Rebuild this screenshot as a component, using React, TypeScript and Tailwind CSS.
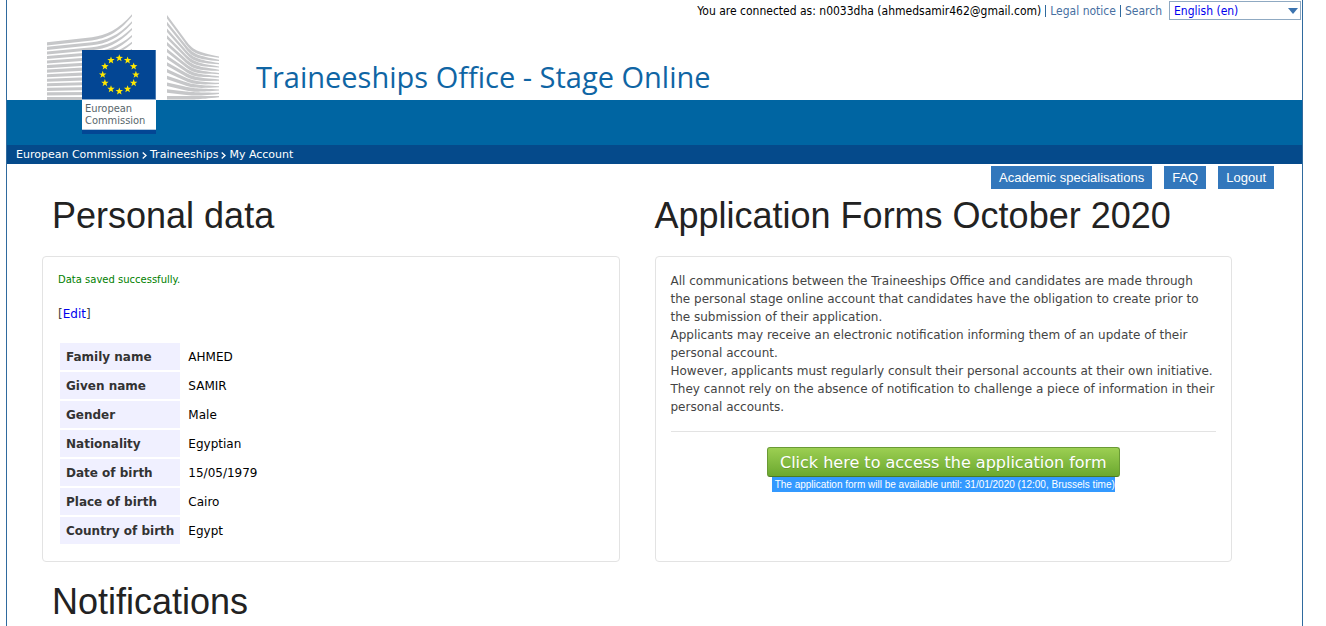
import { Fragment } from "react";

const crumbs = ["European Commission", "Traineeships", "My Account"];

const actions = ["Academic specialisations", "FAQ", "Logout"];

const personalData = [
  ["Family name", "AHMED"],
  ["Given name", "SAMIR"],
  ["Gender", "Male"],
  ["Nationality", "Egyptian"],
  ["Date of birth", "15/05/1979"],
  ["Place of birth", "Cairo"],
  ["Country of birth", "Egypt"],
];

const strips = Array.from({ length: 13 }, (_, i) => i);

// Tapered strip of the left wing, flatter towards the bottom
function leftStrip(i: number) {
  const k = 1 - i / 12;
  const y = 42.3 + 4.55 * i;
  const b = y + 3.1;
  return `M47 ${y}L92 ${y - 5 * k}C106 ${y - 7 * k} 118 ${y - 12 * k} 132 ${y - 28 * k}V${y - 28 * k + 2}C118 ${b - 12 * k} 106 ${b - 7 * k} 92 ${b - 5 * k}L47 ${b}Z`;
}

function rightStrip(i: number) {
  const k = 1 - i / 12;
  const y = 15 + 6.75 * i;
  const b = y + 3.6;
  const e = y + 41.5 * k;
  return `M167 ${y}L184 ${y + 23 * k}C193 ${y + 36 * k} 198 ${y + 37 * k} 219 ${e}V${e + 1.2}C197 ${b + 37 * k} 192 ${b + 35 * k} 184 ${b + 23 * k}L167 ${b}Z`;
}

function star(cx: number, cy: number) {
  const points = [];
  for (let i = 0; i < 10; i++) {
    const r = i % 2 ? 1.6 : 3.9;
    const a = (Math.PI * i) / 5 - Math.PI / 2;
    points.push(`${(cx + r * Math.cos(a)).toFixed(2)},${(cy + r * Math.sin(a)).toFixed(2)}`);
  }
  return points.join(" ");
}

function Logo() {
  return (
    <svg
      role="img"
      aria-label="European Commission"
      viewBox="47 14 173 120"
      className="absolute left-10 top-[14px] w-[173px] h-[120px]"
    >
      <g fill="#c6c7c9">
        {strips.map((i) => (
          <path key={i} d={leftStrip(i)} />
        ))}
        {strips.map((i) => (
          <path key={i} d={rightStrip(i)} />
        ))}
      </g>
      <rect x="82" y="50" width="74" height="50" fill="#8fb0d2" />
      <rect x="82" y="50" width="73.5" height="49" fill="#034694" />
      {Array.from({ length: 12 }, (_, i) => {
        const a = (Math.PI * i) / 6;
        return (
          <polygon
            key={i}
            fill="#ffe800"
            points={star(119.3 + 16.6 * Math.sin(a), 74.7 - 16.6 * Math.cos(a))}
          />
        );
      })}
      <rect x="82" y="100" width="74" height="29" fill="#fff" />
      <rect x="82" y="129" width="74" height="1" fill="#b5cbe0" />
      <rect x="82" y="130" width="74" height="4" fill="#034694" />
      <g fill="#58666b" fontFamily="'DejaVu Sans Condensed', 'DejaVu Sans', sans-serif" fontSize="11">
        <text x="85" y="112">European</text>
        <text x="85" y="124">Commission</text>
      </g>
    </svg>
  );
}

function Chevron() {
  return (
    <svg viewBox="0 0 5 7" className="w-[5px] h-[7px] mx-[3px]" fill="none" stroke="#fff" strokeWidth="1.3">
      <path d="M.7.5 4 3.5.7 6.5" />
    </svg>
  );
}

function Header() {
  return (
    <header className="relative">
      <div className="flex flex-col justify-between h-[100px]">
        <div className="flex items-center justify-end pt-px pr-px text-xs leading-[18px] font-['DejaVu_Sans_Condensed','DejaVu_Sans',sans-serif] text-[#476fa1]">
          <span className="text-black">You are connected as: n0033dha (ahmedsamir462@gmail.com)</span>
          <span className="w-px h-3 mx-1 bg-[#2f6a9e]" />
          <a href="#legal">Legal notice</a>
          <span className="w-px h-3 mx-1 bg-[#2f6a9e]" />
          <a href="#search">Search</a>
          <div className="relative ml-[7px]">
            <select
              aria-label="Language"
              defaultValue="en"
              className="block appearance-none w-[132px] h-[19px] pl-1 border border-[#8fa9c2] bg-white text-[#0000ee]"
            >
              <option value="en">English (en)</option>
            </select>
            <svg viewBox="0 0 10 6" className="absolute right-[3px] top-[7px] w-[10px] h-[6px] pointer-events-none">
              <path d="M0 0H10L5 6Z" fill="#3b73af" />
            </svg>
          </div>
        </div>
        <div className="pl-[249px] pb-[3px] font-['Open_Sans',sans-serif] text-[29px] leading-10 text-[#0f65a4]">
          Traineeships Office - Stage Online
        </div>
      </div>
      <div className="h-[45px] bg-[#0065a2]" />
      <nav className="flex items-center h-[19px] pt-px px-[9px] bg-[#054a8b] text-[11px] text-white">
        {crumbs.map((crumb, i) => (
          <Fragment key={crumb}>
            {i > 0 && <Chevron />}
            <a href="#crumb">{crumb}</a>
          </Fragment>
        ))}
      </nav>
      <Logo />
    </header>
  );
}

function Heading({ children, className = "" }: { children: string; className?: string }) {
  return (
    <h1 className={`font-['Liberation_Sans',Arial,sans-serif] text-4xl leading-10 text-[#222] ${className}`}>
      {children}
    </h1>
  );
}

export default function App() {
  return (
    <div className="min-h-screen bg-white font-['DejaVu_Sans',Verdana,sans-serif] text-xs text-[#444]">
      <div className="min-h-screen ml-[6px] mr-[23px] border-x border-[#2f6a9e]">
        <Header />

        <div className="flex justify-end gap-3 pt-[2px] pr-7 font-['Liberation_Sans',Arial,sans-serif] text-[13px] leading-[23px] text-white">
          {actions.map((label) => (
            <a key={label} href="#action" className="px-2 bg-[#3277bc]">
              {label}
            </a>
          ))}
        </div>

        <main className="pt-[7px] pl-[35px] pr-[70px]">
          <div className="grid grid-cols-2 gap-x-[35px]">
            <section className="flex flex-col">
              <Heading className="mb-5 pl-[10px]">Personal data</Heading>
              <div className="grow p-[15px] border border-[#e3e3e3] rounded">
                <p className="text-[10px] leading-4 text-[#008000]">Data saved successfully.</p>
                <p className="mt-[17px] leading-[18px]">
                  [<a href="#edit" className="text-[#0000ee]">Edit</a>]
                </p>
                <table className="mt-[18px] border-separate border-spacing-[2px] leading-[17px]">
                  <tbody>
                    {personalData.map(([label, value]) => (
                      <tr key={label}>
                        <th scope="row" className="px-[6px] pt-[6px] pb-1 text-left font-bold bg-[#f0f0ff] text-[#333]">
                          {label}
                        </th>
                        <td className="px-[6px] pt-[6px] pb-1 text-black">{value}</td>
                      </tr>
                    ))}
                  </tbody>
                </table>
              </div>
            </section>

            <section className="flex flex-col">
              <Heading className="mb-5">Application Forms October 2020</Heading>
              <div className="grow p-[15px] border border-[#e3e3e3] rounded">
                <div className="leading-[18px]">
                  <p>
                    All communications between the Traineeships Office and candidates are made through the
                    personal stage online account that candidates have the obligation to create prior to the
                    submission of their application.
                  </p>
                  <p>
                    Applicants may receive an electronic notification informing them of an update of their
                    personal account.
                  </p>
                  <p>
                    However, applicants must regularly consult their personal accounts at their own initiative.
                    They cannot rely on the absence of notification to challenge a piece of information in their
                    personal accounts.
                  </p>
                </div>
                <hr className="my-[15px] border-[#e3e3e3]" />
                <div className="flex flex-col items-center">
                  <button
                    type="button"
                    className="h-[30px] pt-px px-3 rounded-[3px] border border-[#6a9a35] border-b-[#4c7a22] bg-linear-to-b from-[#9ccf52] to-[#6ba82f] text-base leading-none text-white text-shadow-2xs"
                  >
                    Click here to access the application form
                  </button>
                  <p className="pl-[3px] bg-[#3399ff] font-['Liberation_Sans',Arial,sans-serif] text-[10px] leading-[15px] text-white">
                    The application form will be available until: 31/01/2020 (12:00, Brussels time)
                  </p>
                </div>
              </div>
            </section>
          </div>

          <Heading className="mt-5 pl-[10px]">Notifications</Heading>
        </main>
      </div>
    </div>
  );
}
